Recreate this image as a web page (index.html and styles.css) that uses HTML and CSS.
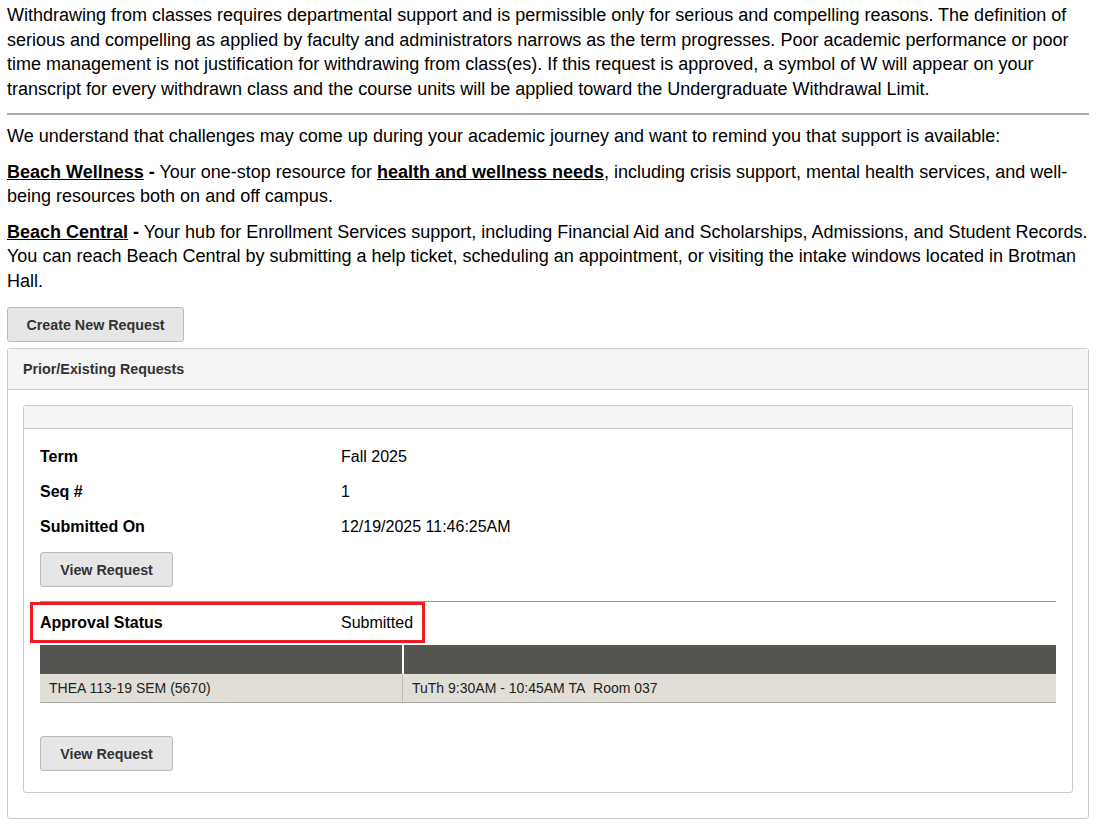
FILE: index.html
```html
<!DOCTYPE html>
<html>
  <head>
    <meta charset="utf-8">
    <title>Withdrawal Requests</title>
    <link rel="stylesheet" href="styles.css">
  </head>
  <body>
    <div class="intro">
      <p>Withdrawing from classes requires departmental support and is permissible only for serious and compelling reasons. The definition of serious and compelling as applied by faculty and administrators narrows as the term progresses. Poor academic performance or poor time management is not justification for withdrawing from class(es). If this request is approved, a symbol of W will appear on your transcript for every withdrawn class and the course units will be applied toward the Undergraduate Withdrawal Limit.</p>
      <hr class="rule">
      <p>We understand that challenges may come up during your academic journey and want to remind you that support is available:</p>
      <p><a href="#" class="link">Beach Wellness</a> <b>-</b> Your one-stop resource for <a href="#" class="link">health and wellness needs</a>, including crisis support, mental health services, and well-being resources both on and off campus.</p>
      <p><a href="#" class="link">Beach Central</a> <b>-</b> Your hub for Enrollment Services support, including Financial Aid and Scholarships, Admissions, and Student Records. You can reach Beach Central by submitting a help ticket, scheduling an appointment, or visiting the intake windows located in Brotman Hall.</p>
    </div>

    <button class="btn btn-create">Create New Request</button>

    <div class="panel">
      <div class="panel-head">Prior/Existing Requests</div>
      <div class="panel-body">
        <div class="card">
          <div class="card-head"></div>
          <div class="card-body">
            <div class="row"><span class="label">Term</span><span class="value">Fall 2025</span></div>
            <div class="row"><span class="label">Seq #</span><span class="value">1</span></div>
            <div class="row"><span class="label">Submitted On</span><span class="value">12/19/2025 11:46:25AM</span></div>
            <button class="btn btn-view">View Request</button>
            <hr class="card-rule">
            <div class="status">
              <div class="row status-row"><span class="label">Approval Status</span><span class="value">Submitted</span></div>
            </div>
            <table class="classes">
              <thead>
                <tr><th></th><th></th></tr>
              </thead>
              <tbody>
                <tr><td>THEA 113-19 SEM (5670)</td><td>TuTh 9:30AM - 10:45AM TA&nbsp; Room 037</td></tr>
              </tbody>
            </table>
            <button class="btn btn-view btn-last">View Request</button>
          </div>
        </div>
      </div>
    </div>
  </body>
</html>
```

FILE: styles.css
```css
html {
  font-family: "Liberation Sans", Arial, sans-serif;
}
body {
  margin: 0;
  padding: 3px 7px 0 7px;
  color: #000;
  background: #fff;
}
.intro p {
  font-size: 18px;
  line-height: 24.5px;
  margin: 0 0 11px 0;
}
.intro p:first-child {
  margin-bottom: 0;
}
.rule {
  border: 0;
  border-top: 2px solid #aaa;
  margin: 12px 0 9px 0;
}
.link {
  color: #000;
  font-weight: bold;
  text-decoration: underline;
}
.btn {
  font-family: "Liberation Sans", Arial, sans-serif;
  font-size: 14.3px;
  font-weight: bold;
  color: #333;
  background: #e6e6e6;
  border: 1px solid #bbb;
  border-radius: 3px;
  height: 35px;
  padding: 0;
  white-space: nowrap;
  cursor: pointer;
}
.btn-create {
  display: block;
  margin-top: 14px;
  width: 177px;
}
.panel {
  margin-top: 6px;
  border: 1px solid #ccc;
  border-radius: 3px;
}
.panel-head {
  background: #f4f4f4;
  border-bottom: 1px solid #ccc;
  height: 40px;
  line-height: 40px;
  padding-left: 15px;
  font-size: 14.3px;
  font-weight: bold;
  color: #333;
}
.panel-body {
  padding: 15px 15px 25px 15px;
}
.card {
  border: 1px solid #ccc;
  border-radius: 3px;
}
.card-head {
  background: #f4f4f4;
  border-bottom: 1px solid #ccc;
  height: 22px;
}
.card-body {
  padding: 10px 16px 21px 16px;
}
.row {
  display: flex;
  height: 35px;
  align-items: center;
  font-size: 16px;
}
.label {
  width: 301px;
  font-weight: bold;
}
.btn-view {
  display: block;
  width: 133px;
  margin-top: 8px;
}
.card-rule {
  border: 0;
  border-top: 1px solid #999;
  margin: 14px 0 0 0;
}
.status {
  display: inline-block;
  border: 3px solid #ed1c24;
  margin-left: -10px;
  padding: 0 9px 0 7px;
}
.status-row {
  height: 35px;
}
.classes {
  width: 100%;
  border-collapse: collapse;
  margin-top: 2px;
  font-size: 14px;
}
.classes th {
  background: #555552;
  height: 29px;
  padding: 0;
}
.classes th + th {
  border-left: 2px solid #fff;
}
.classes td {
  background: #e1ded8;
  height: 28px;
  padding: 0 9px;
  border-bottom: 1px solid #aaa;
  color: #222;
}
.classes td:first-child {
  width: 344px;
}
.classes td + td {
  border-left: 1px solid #bbb;
}
.btn-last {
  margin-top: 33px;
}
```
